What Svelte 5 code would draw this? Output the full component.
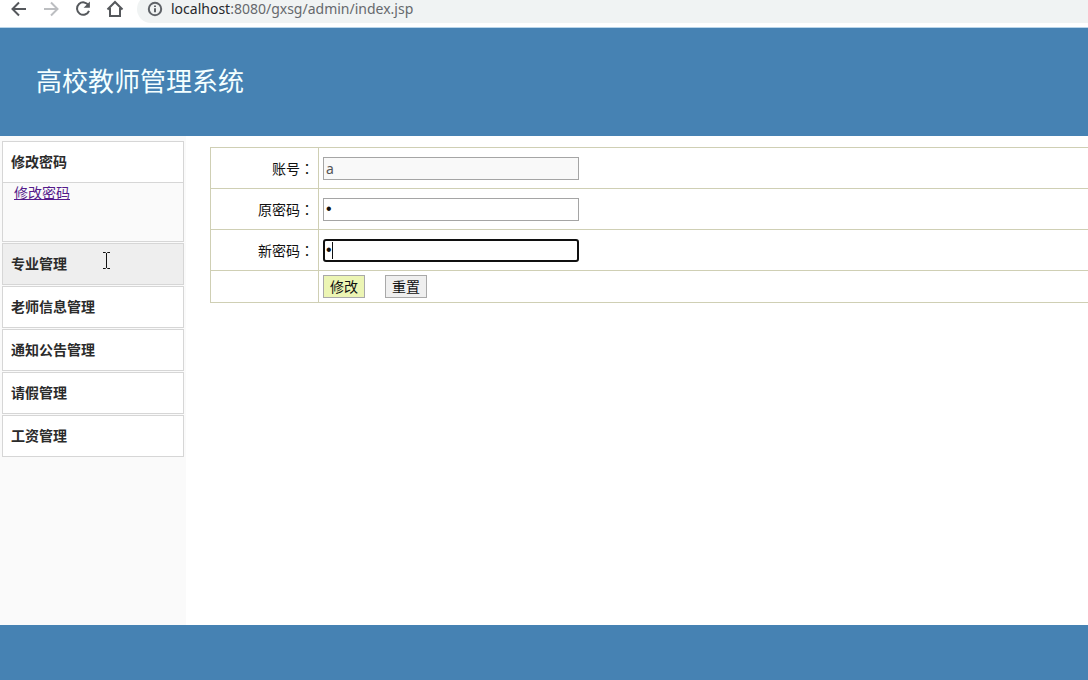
<script>
  const menu = ['专业管理', '老师信息管理', '通知公告管理', '请假管理', '工资管理'];
  let hovered = $state('专业管理');
  let account = $state('a');
  let oldPassword = $state('1');
  let newPassword = $state('1');
</script>

<div class="page">
  <nav class="toolbar" aria-label="浏览器">
    <button type="button" aria-label="后退">
      <svg viewBox="0 0 18 18"><path d="M16 9H3M9 2.5 2.5 9 9 15.5" /></svg>
    </button>
    <button type="button" class="off" aria-label="前进">
      <svg viewBox="0 0 18 18"><path d="M2 9h13M9 2.500 15.500 9 9 15.500" /></svg>
    </button>
    <button type="button" aria-label="刷新">
      <svg viewBox="0 0 18 18"><path d="M14.600 5.500A6.200 6.200 0 1 0 15 10.800" /><path class="fill" d="M15.900 1.500v6.300H9.600z" /></svg>
    </button>
    <button type="button" aria-label="主页">
      <svg viewBox="0 0 18 18"><path d="M1.500 9.500 9 2l7.500 7.500M4 8v8h10V8" /></svg>
    </button>
    <div class="address">
      <svg viewBox="0 0 16 16"><circle cx="8" cy="8" r="6.200" /><path d="M8 7.200v4M8 4.400v1.600" /></svg>
      <span><b>localhost</b>:8080/gxsg/admin/index.jsp</span>
    </div>
  </nav>

  <header><h1>高校教师管理系统</h1></header>

  <div class="body">
    <aside>
      <section>
        <button type="button" class="item">修改密码</button>
        <div class="sub"><a href="#password">修改密码</a></div>
      </section>
      {#each menu as name}
        <button type="button" class="item" class:hover={hovered === name} onmouseenter={() => (hovered = name)}>
          {name}
          {#if hovered === name}
            <svg class="pointer" viewBox="0 0 9 17" aria-hidden="true"><path d="M1 .5h2.500l1 1 1-1H8M4.500 1v15M1 16.500h2.500l1-1 1 1H8" /></svg>
          {/if}
        </button>
      {/each}
    </aside>

    <main>
      <form onsubmit={(e) => e.preventDefault()}>
        <table>
          <tbody>
            <tr>
              <th scope="row"><label for="account">账号<span class="colon">：</span></label></th>
              <td><input id="account" type="text" readonly bind:value={account} /></td>
            </tr>
            <tr>
              <th scope="row"><label for="old">原密码<span class="colon">：</span></label></th>
              <td><input id="old" type="password" bind:value={oldPassword} /></td>
            </tr>
            <tr>
              <th scope="row"><label for="new">新密码<span class="colon">：</span></label></th>
              <td><div class="field"><input id="new" class="active" type="password" bind:value={newPassword} /><i class="caret"></i></div></td>
            </tr>
            <tr class="actions">
              <th></th>
              <td>
                <div class="buttons">
                  <button type="submit" class="save">修改</button>
                  <button type="reset">重置</button>
                </div>
              </td>
            </tr>
          </tbody>
        </table>
      </form>
    </main>
  </div>

  <footer></footer>
</div>

<style>
  :global(body) {
    background: #fff;
    overflow: hidden;
  }
  .page {
    display: flex;
    flex-direction: column;
    height: 100vh;
    font: 14px/20px "Noto Sans", "Noto Sans CJK SC", sans-serif;
    color: #111;
  }
  button,
  input {
    font: inherit;
    color: inherit;
    box-sizing: border-box;
    margin: 0;
  }
  svg {
    display: block;
    fill: none;
  }

  .toolbar {
    flex: none;
    display: flex;
    align-items: flex-end;
    gap: 14px;
    height: 23px;
    padding: 0 0 4px 10px;
    border-bottom: 1px solid #b9d5ea;
  }
  .toolbar button {
    width: 18px;
    height: 28px;
    padding: 0;
    border: 0;
    background: none;
    stroke: #55585c;
    stroke-width: 2;
  }
  .toolbar button svg {
    width: 18px;
    height: 18px;
  }
  .toolbar .off {
    stroke: #bcbec1;
  }
  .fill {
    fill: #55585c;
    stroke: none;
  }
  .address {
    flex: 1;
    display: flex;
    align-items: center;
    gap: 8px;
    height: 28px;
    margin-left: -1px;
    padding-left: 10px;
    border-radius: 14px 0 0 14px;
    background: #f0f3f3;
    color: #66696d;
  }
  .address svg {
    width: 16px;
    height: 16px;
    stroke: #5f6368;
    stroke-width: 2;
  }
  .address b {
    font-weight: 400;
    color: #26282b;
  }

  header {
    flex: none;
    display: flex;
    align-items: center;
    box-sizing: border-box;
    height: 108px;
    padding: 0 0 4px 36px;
    background: #4682b3;
  }
  h1 {
    margin: 0;
    font: 400 26px/36px "Noto Sans CJK SC", sans-serif;
    color: #f4ffff;
  }

  .body {
    flex: 1;
    display: flex;
    min-height: 0;
  }
  aside {
    flex: none;
    display: flex;
    flex-direction: column;
    gap: 1px;
    box-sizing: border-box;
    width: 186px;
    padding: 5px 2px;
    background: #fafafa;
  }
  .item {
    position: relative;
    display: block;
    width: 100%;
    height: 42px;
    padding: 0 8px;
    border: 1px solid #d6d6d6;
    background: #fff;
    color: #2b2b2b;
    font-weight: 700;
    text-align: left;
  }
  .hover {
    background: #eee;
  }
  .pointer {
    position: absolute;
    left: 99px;
    top: 8px;
    width: 9px;
    height: 17px;
    stroke: #111;
  }
  .sub {
    height: 58px;
    padding-left: 11px;
    border: 1px solid #d6d6d6;
    border-top: 0;
  }
  .sub a {
    color: #551a8b;
  }

  main {
    flex: 1;
    min-width: 0;
    padding: 11px 0 0 24px;
  }
  table {
    width: 100%;
    border-collapse: collapse;
  }
  th,
  td {
    height: 40px;
    padding: 0 4px;
    border: 1px solid #cfcfb4;
    border-right: 0;
  }
  th {
    width: 99px;
    font-weight: 400;
    text-align: right;
  }
  .colon {
    font-family: "Noto Sans CJK TC", sans-serif;
  }
  .actions > * {
    height: 31px;
  }
  td input {
    display: block;
    width: 256px;
    height: 23px;
    padding: 0 2px;
    border: 1px solid #a5a5a5;
    outline: 0;
    background: #fff;
  }
  td input[type="password"] {
    font-family: "Liberation Sans", sans-serif;
    font-size: 16px;
  }
  td input[readonly] {
    background: #f9f9f9;
    color: #555;
  }
  td .active {
    padding: 0 1px;
    border: 2px solid #101010;
    border-radius: 3px;
  }
  .field {
    position: relative;
  }
  .caret {
    position: absolute;
    left: 9px;
    top: 3px;
    width: 1px;
    height: 17px;
    background: #111;
  }
  .buttons {
    display: flex;
    gap: 20px;
  }
  .buttons button {
    width: 42px;
    height: 23px;
    padding: 0;
    border: 1px solid #a9a9a9;
    background: #efefef;
  }
  .buttons .save {
    background: #ecf5b4;
  }

  footer {
    flex: none;
    height: 55px;
    background: #4682b3;
  }
</style>
